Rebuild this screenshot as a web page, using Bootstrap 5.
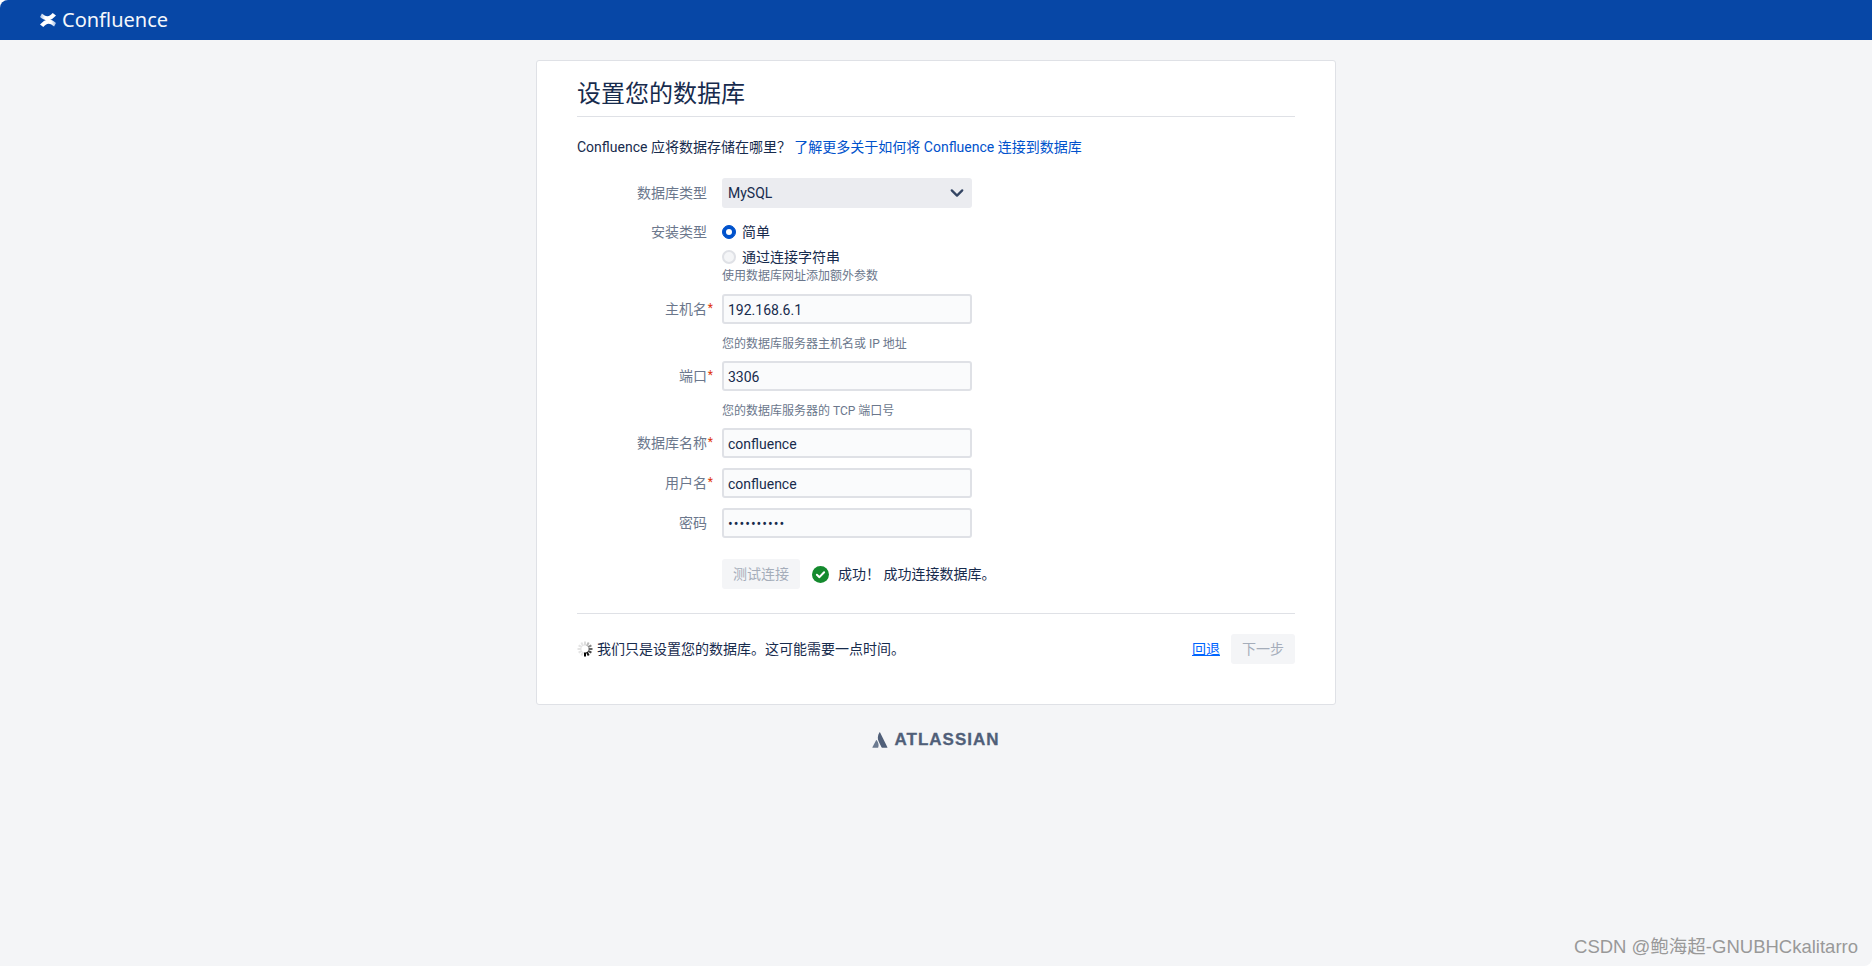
<!DOCTYPE html>
<html lang="zh-CN">
  <head>
    <meta charset="UTF-8" />
    <meta name="viewport" content="width=device-width, initial-scale=1.0" />
    <title>设置您的数据库 - Confluence</title>
    <link href="https://cdn.jsdelivr.net/npm/bootstrap@5.3.0/dist/css/bootstrap.min.css" rel="stylesheet" />
    <style>
      html {
  background: #fff;
}
body {
  min-height: 966px;
  background: #f4f5f7;
  color: #172b4d;
  font-family: Roboto, "Noto Sans CJK SC", sans-serif;
  font-size: 14px;
  line-height: 20px;
  border-radius: 8px 0 8px 0;
  overflow: hidden;
  position: relative;
}
.top-bar {
  height: 40px;
  background: #0747a6;
  padding-left: 39px;
  color: #fff;
}
.top-bar .brand {
  font-family: "Noto Sans", sans-serif;
  font-size: 20px;
  line-height: 40px;
  color: #f4f7fb;
  margin-left: 1px;
}
.setup-card {
  width: 800px;
  height: 645px;
  margin: 20px auto 0;
  padding: 0 40px;
  background: #fff;
  border: 1px solid #dfe1e6;
  border-radius: 3px;
}
.setup-title {
  height: 56px;
  margin: 0;
  padding-top: 17px;
  border-bottom: 1px solid #dfe1e6;
  font-size: 24px;
  line-height: 32px;
  font-weight: 400;
  color: #172b4d;
}
.intro {
  margin: 20px 0 21px;
  font-size: 14px;
}
.intro a, .back-link {
  color: #0052cc;
  text-decoration: none;
}
.back-link {
  text-decoration: underline;
  color: #0065ff;
}
.field-row {
  display: flex;
  margin-bottom: 10px;
}
.field-label {
  width: 145px;
  flex: none;
  padding-right: 15px;
  line-height: 30px;
  text-align: right;
  color: #6b778c;
  position: relative;
}
.req {
  position: absolute;
  right: 9px;
  top: 1px;
  color: #de350b;
  font-size: 12px;
  line-height: 26px;
}
.field-box {
  width: 250px;
}
.setup-card .form-control, .setup-card .form-select {
  height: 30px;
  min-height: 30px;
  padding: 0 4px;
  border: 2px solid #dfe1e6;
  border-radius: 3px;
  background-color: #fafbfc;
  color: #172b4d;
  font-size: 14px;
  line-height: 26px;
}
.setup-card .form-control {
  padding-top: 2px;
}
.setup-card .form-select {
  border-color: #ebecf0;
  background-color: #ebecf0;
  background-image: url("data:image/svg+xml,%3csvg xmlns='http://www.w3.org/2000/svg' viewBox='0 0 16 16'%3e%3cpath fill='none' stroke='%23344563' stroke-linecap='round' stroke-linejoin='round' stroke-width='2.600' d='M2 5l6 6 6-6'/%3e%3c/svg%3e");
  background-position: right 6px center;
  background-size: 14px 14px;
}
.pw-field {
  letter-spacing: 1px;
}
.radio-line {
  display: flex;
  align-items: center;
  gap: 6px;
  height: 20px;
  min-height: 0;
  margin: 0;
  padding: 0;
}
.radio-gap {
  margin-bottom: 5px;
}
.radio-line .form-check-input {
  float: none;
  width: 14px;
  height: 14px;
  margin: 0;
  flex: none;
}
.radio-line .form-check-input:checked {
  background-color: #0052cc;
  border-color: #0052cc;
}
.radio-line .form-check-input:disabled {
  opacity: 1;
  background-color: #f4f5f7;
  border: 2px solid #dfe1e6;
}
.hint {
  color: #6b778c;
  font-size: 12px;
  line-height: 16px;
}
.kind-hint {
  margin-top: 1px;
}
.hint-row {
  margin: 10px 0 7px 145px;
  height: 20px;
  line-height: 20px;
}
.grey-btn, .grey-btn:disabled {
  height: 30px;
  padding: 0 11px;
  border: 0;
  border-radius: 3px;
  background: #f4f5f7;
  color: #a5adba;
  font-size: 14px;
  line-height: 30px;
  opacity: 1;
}
.status-ok {
  width: 17px;
  height: 17px;
  flex: none;
  margin-left: 12px;
}
.status-text {
  margin-left: 9px;
}
.foot-rule {
  margin: 24px 0 20px;
  border: 0;
  border-top: 1px solid #dfe1e6;
  opacity: 1;
}
.next-btn {
  width: 64px;
  padding: 0;
}
.atl-logo {
  margin-top: 25px;
  height: 20px;
  gap: 6px;
  color: #505f79;
  font-family: "Liberation Sans", sans-serif;
  font-size: 17px;
  font-weight: 700;
  letter-spacing: 1px;
  line-height: 20px;
  -webkit-text-stroke: 0.3px #505f79;
}
.watermark {
  position: absolute;
  right: 14px;
  bottom: 7px;
  color: #999;
  font-family: "Liberation Sans", "Noto Sans CJK SC", sans-serif;
  font-size: 18.5px;
  line-height: 24px;
}
    </style>
  </head>
  <body>
    <div class="top-bar d-flex align-items-center gap-1">
      <svg width="18" height="16" viewBox="0 0 18 16">
        <defs>
          <linearGradient id="swoosh" x1="0" y1="0" x2="1" y2="0">
            <stop offset="0" stop-color="#fff" />
            <stop offset="0.7" stop-color="#fff" />
            <stop offset="1" stop-color="#9db9e2" />
          </linearGradient>
          <linearGradient id="swoosh2" x1="1" y1="0" x2="0" y2="0">
            <stop offset="0" stop-color="#fff" />
            <stop offset="0.7" stop-color="#fff" />
            <stop offset="1" stop-color="#9db9e2" />
          </linearGradient>
        </defs>
        <path fill="url(#swoosh)" d="M1 12.600c2.500-2.400 5-5 8.500-5 3 0 5.500 1.700 7.500 3.400l-1.900 3.400c-1.900-1.500-3.500-2.700-5.600-2.700-1.900 0-3.500 1.500-5.200 3.300L1 12.600Z" />
        <path fill="url(#swoosh2)" d="M17 3.400c-2.500 2.400-5 5-8.500 5-3 0-5.500-1.700-7.500-3.400l1.900-3.400C4.800 3.100 6.400 4.300 8.500 4.300c1.900 0 3.500-1.500 5.200-3.300L17 3.400Z" />
      </svg>
      <span class="brand">Confluence</span>
    </div>

    <div class="setup-card">
      <h1 class="setup-title">设置您的数据库</h1>
      <p class="intro">Confluence 应将数据存储在哪里？ <a href="#">了解更多关于如何将 Confluence 连接到数据库</a></p>

      <form>
        <div class="field-row" style="margin-bottom: 14px">
          <label class="field-label">数据库类型</label>
          <div class="field-box">
            <select class="form-select"><option>MySQL</option></select>
          </div>
        </div>

        <div class="field-row" style="margin-bottom: 10px">
          <label class="field-label" style="line-height: 20px">安装类型</label>
          <div class="field-box">
            <div class="radio-line form-check radio-gap">
              <input class="form-check-input" type="radio" name="kind" checked />
              <span>简单</span>
            </div>
            <div class="radio-line form-check">
              <input class="form-check-input" type="radio" name="kind" disabled />
              <span>通过连接字符串</span>
            </div>
            <div class="hint kind-hint">使用数据库网址添加额外参数</div>
          </div>
        </div>

        <div class="field-row mb-0">
          <label class="field-label">主机名<span class="req">*</span></label>
          <div class="field-box"><input class="form-control" type="text" value="192.168.6.1" /></div>
        </div>
        <div class="hint hint-row">您的数据库服务器主机名或 IP 地址</div>

        <div class="field-row mb-0">
          <label class="field-label">端口<span class="req">*</span></label>
          <div class="field-box"><input class="form-control" type="text" value="3306" /></div>
        </div>
        <div class="hint hint-row">您的数据库服务器的 TCP 端口号</div>

        <div class="field-row">
          <label class="field-label">数据库名称<span class="req">*</span></label>
          <div class="field-box"><input class="form-control" type="text" value="confluence" /></div>
        </div>
        <div class="field-row">
          <label class="field-label">用户名<span class="req">*</span></label>
          <div class="field-box"><input class="form-control" type="text" value="confluence" /></div>
        </div>
        <div class="field-row">
          <label class="field-label">密码</label>
          <div class="field-box"><input class="form-control pw-field" type="password" value="confluence" /></div>
        </div>

        <div class="d-flex align-items-center" style="margin: 21px 0 0 145px">
          <button class="btn grey-btn" type="button" disabled>测试连接</button>
          <svg class="status-ok" viewBox="0 0 16 16">
            <circle cx="8" cy="8" r="8" fill="#148a2e" />
            <path d="M4.600 8.200 7 10.500l4.400-4.600" fill="none" stroke="#fff" stroke-width="1.900" stroke-linecap="round" stroke-linejoin="round" />
          </svg>
          <span class="status-text">成功！ 成功连接数据库。</span>
        </div>

        <hr class="foot-rule" />

        <div class="d-flex align-items-center">
          <svg width="16" height="16" viewBox="0 0 16 16" style="margin-right: 4px">
            <g stroke-width="2" stroke-linecap="butt">
              <path stroke="#ddd" d="M8 .5v4" />
              <path stroke="#bbb" d="M11.700 1.600 9.800 4.900" />
              <path stroke="#888" d="M14.400 4.300 11.100 6.200" />
              <path stroke="#666" d="M15.500 8h-4" />
              <path stroke="#444" d="M14.400 11.700 11.100 9.800" />
              <path stroke="#111" d="M11.700 14.400 9.800 11.100" />
              <path stroke="#000" d="M8 15.500v-4" />
              <path stroke="#e4e4e4" d="M4.300 14.400 6.200 11.100" />
              <path stroke="#e4e4e4" d="M1.600 11.700 4.900 9.800" />
              <path stroke="#e4e4e4" d="M.5 8h4" />
              <path stroke="#e4e4e4" d="M1.600 4.300 4.900 6.200" />
              <path stroke="#e4e4e4" d="M4.300 1.600 6.200 4.900" />
            </g>
          </svg>
          <span>我们只是设置您的数据库。这可能需要一点时间。</span>
          <a class="back-link ms-auto" href="#" style="margin-right: 11px">回退</a>
          <button class="btn grey-btn next-btn" type="button" disabled>下一步</button>
        </div>
      </form>
    </div>

    <div class="atl-logo d-flex justify-content-center align-items-center">
      <svg width="16" height="16" viewBox="0 0 16 16">
        <path fill="#6b7a90" d="M4.700 8.200c-.2-.3-.5-.2-.6.100L.4 15.200c-.1.3.1.6.4.6h5c.2 0 .3-.1.4-.2.900-2.200.4-5.200-1.500-7.400Z" />
        <path fill="#505f79" d="M7.400.5C5.500 3.600 5.400 7 6.700 9.600l2.800 5.700c.1.300.3.500.6.500h4.900c.3 0 .5-.3.400-.6L8.100.5c-.2-.3-.5-.3-.7 0Z" />
      </svg>
      <span>ATLASSIAN</span>
    </div>

    <div class="watermark">CSDN @鲍海超-GNUBHCkalitarro</div>

    <script src="https://cdn.jsdelivr.net/npm/bootstrap@5.3.0/dist/js/bootstrap.bundle.min.js"></script>
  </body>
</html>
